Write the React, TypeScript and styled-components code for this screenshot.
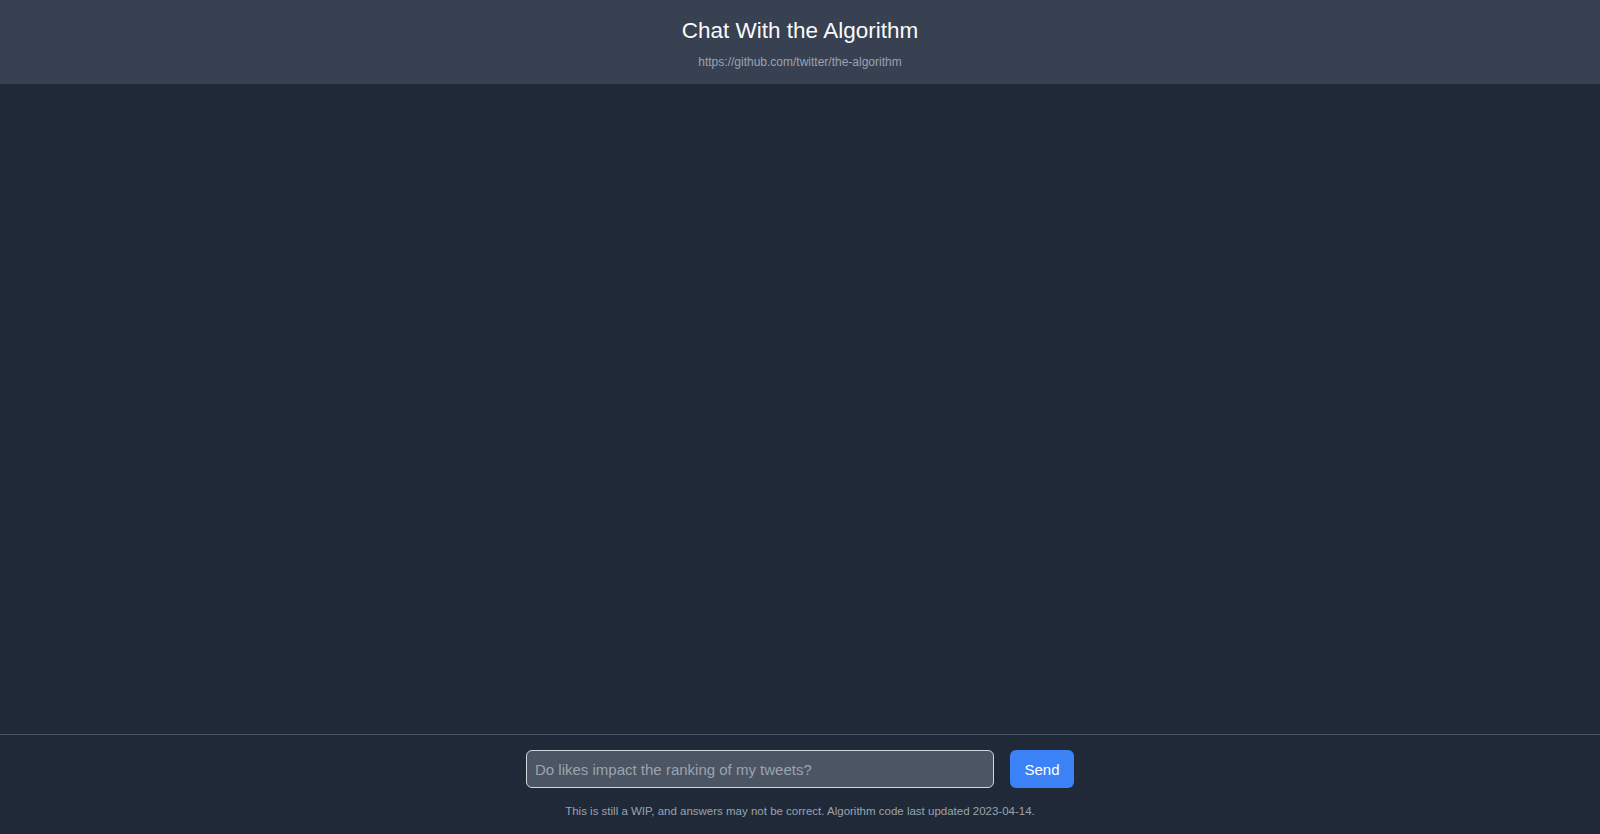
import styled, { createGlobalStyle } from "styled-components";
import { useState } from "react";

const GlobalStyle = createGlobalStyle`
  html, body {
    margin: 0;
    padding: 0;
    height: 100%;
    background: #1f2937;
  }
  #root {
    height: 100%;
  }
  * {
    box-sizing: border-box;
  }
`;

const Page = styled.div`
  display: flex;
  flex-direction: column;
  height: 100vh;
  background: #1f2937;
  font-family: "Liberation Sans", Arial, sans-serif;
  color: #f9fafb;
`;

const Header = styled.header`
  display: flex;
  flex-direction: column;
  align-items: center;
  height: 84px;
  padding-top: 17px;
  background: #374151;
`;

const Title = styled.h1`
  margin: 0;
  font-size: 22.5px;
  line-height: 28px;
  font-weight: 400;
  color: #f9fafb;
`;

const RepoLink = styled.a`
  margin-top: 10px;
  font-size: 12px;
  line-height: 15px;
  color: #9ca3af;
  text-decoration: none;
`;

const Messages = styled.main`
  flex: 1;
  overflow-y: auto;
`;

const Footer = styled.footer`
  display: flex;
  flex-direction: column;
  align-items: center;
  padding: 15px 0 15px;
  border-top: 1px solid #4b5563;
`;

const Form = styled.form`
  display: flex;
  align-items: center;
  gap: 16px;
`;

const Input = styled.input`
  width: 468px;
  height: 38px;
  padding: 0 8px;
  border: 1px solid #d1d5db;
  border-radius: 6px;
  background: #4b5563;
  color: #f9fafb;
  font-family: inherit;
  font-size: 15px;
  outline: none;

  &::placeholder {
    color: #9ca3af;
  }
`;

const SendButton = styled.button`
  width: 64px;
  height: 38px;
  border: none;
  border-radius: 6px;
  background: #3b82f6;
  color: #ffffff;
  font-family: inherit;
  font-size: 15px;
  cursor: pointer;
`;

const Disclaimer = styled.p`
  margin: 15px 0 0;
  font-size: 11.5px;
  line-height: 16px;
  color: #9ca3af;
`;

export default function App() {
  const [question, setQuestion] = useState("");

  return (
    <>
      <GlobalStyle />
      <Page>
        <Header>
          <Title>Chat With the Algorithm</Title>
          <RepoLink href="https://github.com/twitter/the-algorithm">
            https://github.com/twitter/the-algorithm
          </RepoLink>
        </Header>
        <Messages />
        <Footer>
          <Form onSubmit={(e) => e.preventDefault()}>
            <Input
              value={question}
              onChange={(e) => setQuestion(e.target.value)}
              placeholder="Do likes impact the ranking of my tweets?"
            />
            <SendButton type="submit">Send</SendButton>
          </Form>
          <Disclaimer>
            This is still a WIP, and answers may not be correct. Algorithm code
            last updated 2023-04-14.
          </Disclaimer>
        </Footer>
      </Page>
    </>
  );
}
